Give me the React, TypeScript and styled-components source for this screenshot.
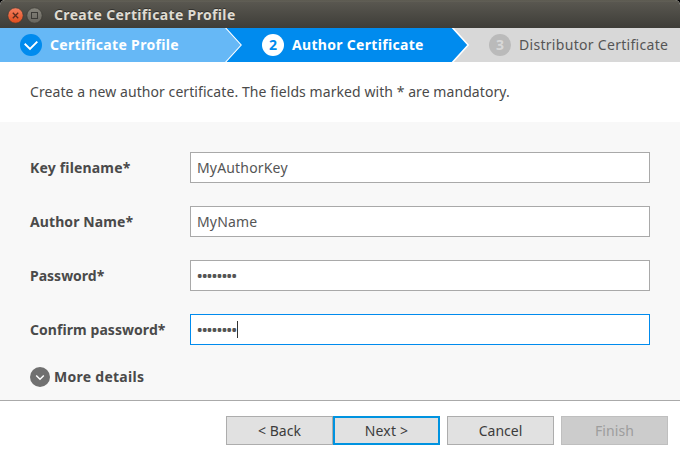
import React from 'react';
import styled, { createGlobalStyle, css } from 'styled-components';

const GlobalStyle = createGlobalStyle`
  * { box-sizing: border-box; }
  body { margin: 0; background: #000; overflow: hidden; }
`;

const Dialog = styled.div`
  width: 680px;
  height: 460px;
  display: flex;
  flex-direction: column;
  background: #fff;
  border-radius: 5px 5px 0 0;
  overflow: hidden;
  color: #4a4a4a;
  font-family: 'Noto Sans', 'Open Sans', sans-serif;
  font-size: 14px;
  line-height: 20px;
  white-space: nowrap;
`;

const Label = styled.span<{ $track?: number; $bold?: boolean }>`
  letter-spacing: ${(p) => p.$track ?? 0}px;
  font-weight: ${(p) => (p.$bold ? 700 : 400)};
`;

const TitleBar = styled.header`
  flex: 0 0 28px;
  display: flex;
  align-items: center;
  padding: 2px 0 0 7px;
  color: #dfdbd2;
  background: linear-gradient(#55534a 0, #66645a 1px, #595750 2px, #3e3d38 100%);
`;

const WindowIcon = styled.svg`
  display: block;
  width: 17px;
  height: 17px;
  margin-right: 2px;
`;

const Title = styled.h1`
  margin: 0 0 0 9px;
  font-size: 14px;
  line-height: 20px;
  text-shadow: 0 -1px 0 #33322e;
`;

const Steps = styled.nav`
  flex: 0 0 34px;
  display: grid;
  grid-template-columns: 242px 227px 211px;
  background: #d8d8d8;
`;

type StepState = 'done' | 'current' | 'pending';

const stepStyles = {
  done: css`
    color: #fff;
    background: #008bee;
  `,
  current: css`
    color: #fff;
    background: #d8d8d8;
  `,
  pending: css`
    color: #555;
    background: #d8d8d8;
  `,
};

const Step = styled.div<{ $state: StepState }>`
  position: relative;
  display: flex;
  align-items: center;
  padding-left: 20px;
  ${(p) => stepStyles[p.$state]}
`;

const StepShape = styled.svg`
  position: absolute;
  inset: 0;
`;

const StepBadge = styled.svg`
  position: relative;
  width: 22px;
  height: 22px;
  margin-right: 8px;
`;

const StepLabel = styled(Label)`
  position: relative;
`;

const Intro = styled.p`
  flex: 0 0 60px;
  margin: 0;
  padding: 20px 30px 0;
`;

const Form = styled.form`
  flex: 0 0 279px;
  padding: 30px 30px 0;
  background: #f8f8f8;
  border-bottom: 1px solid #aaa;
`;

const FieldRow = styled.div`
  display: grid;
  grid-template-columns: 160px 1fr;
  align-items: center;
  height: 31px;
  margin-bottom: 23px;
`;

const Field = styled.div<{ $focused?: boolean }>`
  display: flex;
  align-items: center;
  height: 31px;
  padding-left: 6px;
  color: #555;
  background: #fff;
  border: 1px solid ${(p) => (p.$focused ? '#008bee' : '#a9a9a9')};
`;

const Mask = styled.span`
  padding-top: 1px;
  font-size: 17px;
  letter-spacing: -1.46px;
  margin: 0 1px 0 -0.5px;
`;

const Caret = styled.i`
  width: 1px;
  height: 17px;
  margin-top: -1px;
  background: #333;
`;

const MoreDetails = styled.div`
  display: flex;
  align-items: center;
  gap: 4px;
  height: 20px;
  margin-top: -1px;
`;

const Footer = styled.footer`
  flex: 1;
  display: flex;
  justify-content: flex-end;
  padding: 15px 12px 0 0;
`;

const Button = styled.button<{ $kind?: 'default' | 'disabled'; $gap?: boolean }>`
  width: 107px;
  height: 29px;
  padding: 0;
  margin-left: ${(p) => (p.$gap ? 7 : 0)}px;
  font: inherit;
  color: #3c3c3c;
  background: #e1e1e1;
  border: 1px solid #adadad;
  ${(p) => p.$kind === 'default' && css`border: 2px solid #0093e0;`}
  ${(p) => p.$kind === 'disabled' && css`
    color: #9d9d9d;
    background: #ccc;
    border-color: #bfbfbf;
  `}
`;

const fields = [
  { label: 'Key filename*', track: 0.17, value: 'MyAuthorKey', valueTrack: 0.17 },
  { label: 'Author Name*', track: 0.1, value: 'MyName', valueTrack: 0.15 },
  { label: 'Password*', track: 0, value: '••••••••', masked: true },
  { label: 'Confirm password*', track: 0.06, value: '••••••••', masked: true, focused: true },
];

const Arrow = ({ right, fill, edge }: { right: number; fill: string; edge: number }) => (
  <StepShape width={right} height="34">
    <path d={`M0 0H${right - 16.5}L${right - 0.7} 17L${right - 16.5} 34H0Z`} fill={fill} />
    <path d={`M${right - 16.7} -.5L${right - 0.8} 17L${right - 16.7} 34.5`} fill="none" stroke="#fff" strokeWidth={edge} />
  </StepShape>
);

const NumberBadge = ({ n, bg, fg }: { n: number; bg: string; fg: string }) => (
  <StepBadge viewBox="0 0 22 22">
    <circle cx="11" cy="11" r="11" fill={bg} />
    <text x="11" y="16" textAnchor="middle" fontSize="14" fontWeight="700" fill={fg}>{n}</text>
  </StepBadge>
);

export default function App() {
  return (
    <>
      <GlobalStyle />
      <Dialog>
        <TitleBar>
          <WindowIcon viewBox="0 0 17 17">
            <defs>
              <linearGradient id="close" x2="0" y2="1">
                <stop stopColor="#f58060" />
                <stop offset="1" stopColor="#df4c1c" />
              </linearGradient>
            </defs>
            <circle cx="8.5" cy="8.5" r="7.7" fill="url(#close)" stroke="#3b3934" strokeWidth=".7" />
            <path d="M5.8 5.8L11.2 11.2M11.2 5.8L5.8 11.2" stroke="#592b1d" strokeWidth="1.3" />
          </WindowIcon>
          <WindowIcon viewBox="0 0 17 17">
            <defs>
              <linearGradient id="max" x2="0" y2="1">
                <stop stopColor="#87857c" />
                <stop offset="1" stopColor="#66645d" />
              </linearGradient>
            </defs>
            <circle cx="8.5" cy="8.5" r="7.7" fill="url(#max)" stroke="#3b3934" strokeWidth=".7" />
            <rect x="5.5" y="5.5" width="6" height="6" fill="none" stroke="#3b3a36" />
          </WindowIcon>
          <Title><Label $bold $track={0.35}>Create Certificate Profile</Label></Title>
        </TitleBar>

        <Steps>
          <Step $state="done">
            <Arrow right={242} fill="#66b8f6" edge={1.1} />
            <StepBadge viewBox="0 0 22 22">
              <circle cx="11" cy="11" r="11" fill="#008bee" />
              <path d="M4.7 9.8L10 15L17.3 7.6" fill="none" stroke="#fff" strokeWidth="1.9" />
            </StepBadge>
            <StepLabel $bold $track={0.33}>Certificate Profile</StepLabel>
          </Step>
          <Step $state="current">
            <Arrow right={227} fill="#008bee" edge={1.6} />
            <NumberBadge n={2} bg="#fff" fg="#008bee" />
            <StepLabel $bold $track={0.31}>Author Certificate</StepLabel>
          </Step>
          <Step $state="pending">
            <NumberBadge n={3} bg="#bababa" fg="#d8d8d8" />
            <StepLabel $track={0.3}>Distributor Certificate</StepLabel>
          </Step>
        </Steps>

        <Intro>
          <Label $track={0.07}>Create a new author certificate. The fields marked with * are mandatory.</Label>
        </Intro>

        <Form>
          {fields.map((f) => (
            <FieldRow key={f.label}>
              <Label $bold $track={f.track}>{f.label}</Label>
              <Field $focused={f.focused}>
                {f.masked ? <Mask>{f.value}</Mask> : <Label $track={f.valueTrack}>{f.value}</Label>}
                {f.focused && <Caret />}
              </Field>
            </FieldRow>
          ))}
          <MoreDetails>
            <svg width="20" height="20" viewBox="0 0 20 20">
              <circle cx="10" cy="10" r="10" fill="#707070" />
              <path d="M6.2 8.5L10 12.2L13.8 8.5" fill="none" stroke="#fff" strokeWidth="1.5" />
            </svg>
            <Label $bold $track={0.27}>More details</Label>
          </MoreDetails>
        </Form>

        <Footer>
          <Button><Label>&lt; Back</Label></Button>
          <Button $kind="default"><Label $track={0.2}>Next &gt;</Label></Button>
          <Button $gap><Label>Cancel</Label></Button>
          <Button $gap $kind="disabled" disabled><Label $track={0.1}>Finish</Label></Button>
        </Footer>
      </Dialog>
    </>
  );
}
